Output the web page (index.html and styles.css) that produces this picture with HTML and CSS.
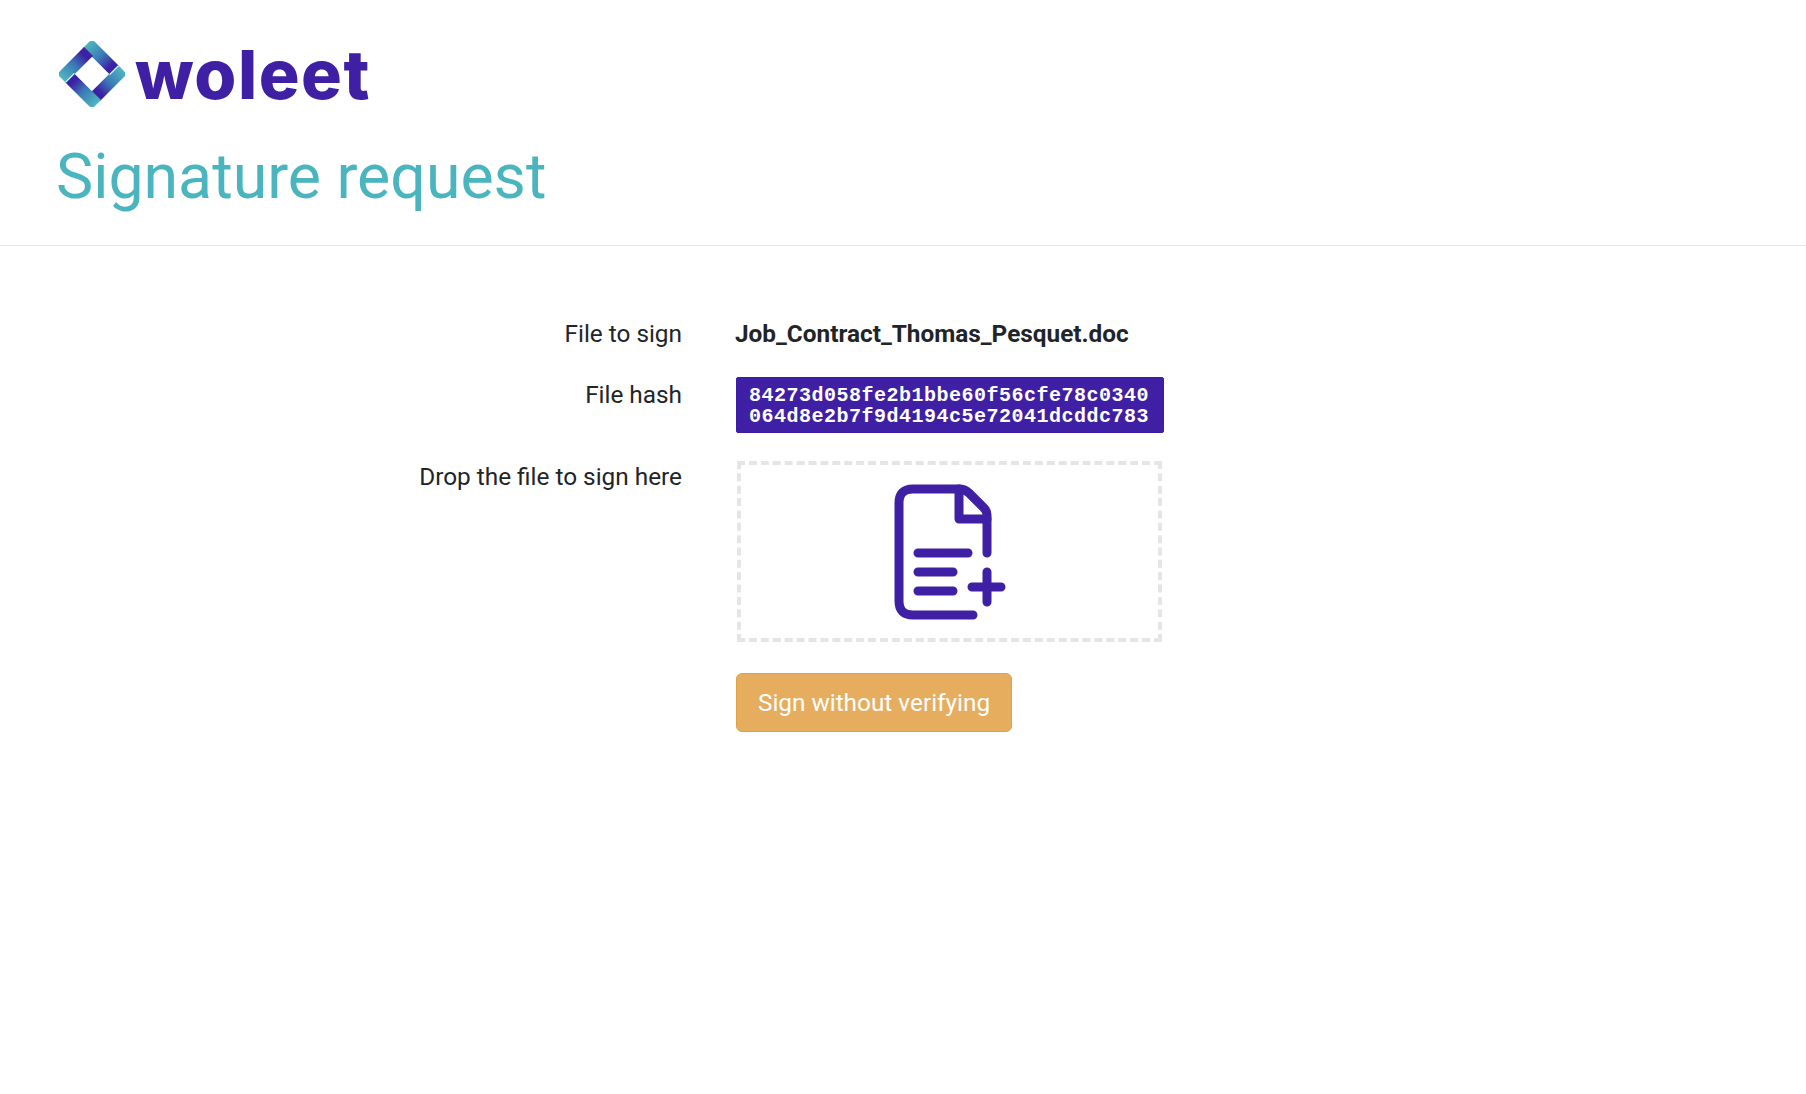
FILE: index.html
```html
<!DOCTYPE html>
<html lang="en">

<head>
    <meta charset="UTF-8">
    <title>Signature request</title>
    <link rel="stylesheet" href="styles.css">
</head>

<body>
    <div class="header">
        <div class="brand">
            <svg class="brand-mark" width="66" height="66" viewBox="0 0 66 66">
                <defs>
                    <linearGradient id="arm-fill">
                        <stop offset="0" stop-color="#4fb8bf" />
                        <stop offset="0.5" stop-color="#3b78b6" />
                        <stop offset="0.85" stop-color="#3d20a5" />
                    </linearGradient>
                    <clipPath id="frame">
                        <path clip-rule="evenodd" d="M13.5 8H52.5Q58 8 58 13.5V52.5Q58 58 52.5 58H13.5Q8 58 8 52.5V13.5Q8 8 13.5 8ZM22 21Q21 21 21 22V44Q21 45 22 45H44Q45 45 45 44V22Q45 21 44 21Z" />
                    </clipPath>
                </defs>
                <g transform="rotate(45 33 33)" clip-path="url(#frame)">
                    <rect id="arm" x="8" y="8" width="38.5" height="13" fill="url(#arm-fill)" />
                    <use href="#arm" transform="rotate(90 33 33)" />
                    <use href="#arm" transform="rotate(180 33 33)" />
                    <use href="#arm" transform="rotate(270 33 33)" />
                    <path class="brand-seam" d="M46 8V21M20 45V58" />
                </g>
            </svg>
            <span class="brand-name">woleet</span>
        </div>
        <h1 class="title">Signature request</h1>
    </div>

    <div class="form">
        <div class="label">File to sign</div>
        <div class="file-name">Job_Contract_Thomas_Pesquet.doc</div>

        <div class="label">File hash</div>
        <div class="hash-cell">
            <code class="hash">84273d058fe2b1bbe60f56cfe78c0340064d8e2b7f9d4194c5e72041dcddc783</code>
        </div>

        <div class="label label-drop">Drop the file to sign here</div>
        <div class="drop-cell">
            <div class="drop-zone">
                <svg class="drop-icon" width="120" height="142" viewBox="30 10 120 142">
                    <path d="M127 82V44Q127 40 124 37L109 22Q105 18 99 18H53Q39 18 39 32V130Q39 144 53 144H113" />
                    <path d="M99 18V48H127" />
                    <path d="M58 82H108M58 101H93M58 120H93" />
                    <path d="M112 116H141M127 101V131" />
                </svg>
            </div>
        </div>

        <div></div>
        <div>
            <button class="btn-sign">Sign without verifying</button>
        </div>
    </div>
</body>

</html>
```

FILE: styles.css
```css
* {
    margin: 0;
    padding: 0;
    box-sizing: border-box;
}

body {
    background: #fff;
    font-family: Roboto, "Liberation Sans", sans-serif;
    color: #212529;
}

.header {
    height: 246px;
    padding: 41px 0 0 56px;
    border-bottom: 1px solid #e3e3e3;
}

.brand {
    display: flex;
    align-items: center;
    height: 66px;
}

.brand-mark {
    margin-left: 3px;
}

.brand-seam {
    fill: none;
    stroke: #fff;
    stroke-width: 1;
}

.brand-name {
    margin-left: 10px;
    font-family: Inter, sans-serif;
    font-size: 68px;
    font-weight: 800;
    line-height: 66px;
    letter-spacing: 1.5px;
    color: #3f20a5;
}

.title {
    margin-top: 34px;
    font-size: 62.6px;
    font-weight: 400;
    line-height: 72px;
    color: #4ab5bf;
}

.form {
    display: grid;
    grid-template-columns: 682px 1fr;
    column-gap: 54px;
    padding-top: 70px;
}

.label {
    font-size: 24.35px;
    line-height: 36px;
    text-align: right;
}

.label-drop {
    margin-top: -2px;
}

.file-name {
    font-size: 24.35px;
    font-weight: 700;
    line-height: 36px;
    margin-left: -1px;
    margin-bottom: 25px;
}

.hash-cell {
    margin-bottom: 28px;
}

.hash {
    display: block;
    width: 428px;
    height: 56px;
    padding: 7px 12px;
    background: #3f20a5;
    border: 1px solid #3a1ca8;
    border-radius: 2px;
    font-family: "Liberation Mono", monospace;
    font-size: 20px;
    font-weight: 700;
    line-height: 21px;
    letter-spacing: .5px;
    color: #fff;
    word-break: break-all;
}

.drop-cell {
    margin-bottom: 31px;
}

.drop-zone {
    display: flex;
    align-items: center;
    justify-content: center;
    width: 425px;
    height: 181px;
    margin-left: 1px;
    border: 4px dashed #e5e5e5;
}

.drop-icon {
    fill: none;
    stroke: #3f20a5;
    stroke-width: 9;
    stroke-linecap: round;
    stroke-linejoin: round;
}

.btn-sign {
    width: 276px;
    height: 59px;
    background: #e6ad5e;
    border: 1px solid #e0a244;
    border-radius: 6px;
    font-family: Roboto, "Liberation Sans", sans-serif;
    font-size: 24.35px;
    color: #fff;
}
```
